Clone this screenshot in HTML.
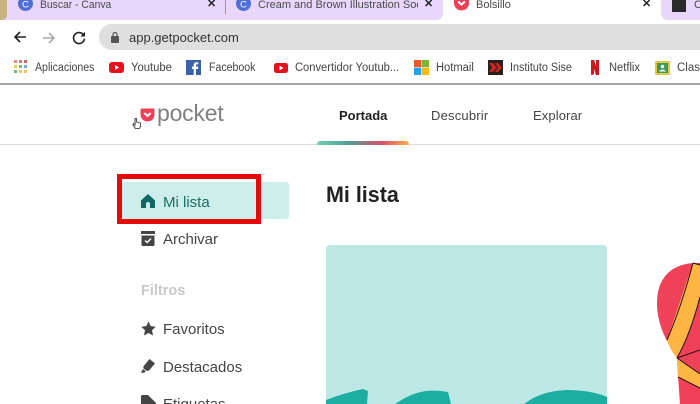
<!DOCTYPE html>
<html lang="es"><head><meta charset="utf-8"><title>Bolsillo</title>
<style>
html,body{margin:0;padding:0;width:700px;height:404px;overflow:hidden;background:#fff}
body{position:relative;font-family:"Liberation Sans",sans-serif;color:#333}
.a{position:absolute}
.t{position:absolute;white-space:nowrap;line-height:1}
.tab{font-size:11px;color:#4a4a4a;top:0;transform-origin:left}
.bm{font-size:11.5px;color:#444;top:62.5px;transform-origin:left}
.x{position:absolute;top:-1px;font-size:11px;font-weight:700;color:#222;line-height:10px}
.nav{font-size:13px;color:#444;top:109px}
.side{font-size:15px;color:#444}
svg{position:absolute;display:block}
</style></head><body>
<div class="a" style="left:0;top:0;width:700px;height:20px;background:#e8d6fb"></div>
<div class="a" style="left:0;top:0;width:7px;height:20px;background:#c9b27f;border-bottom-right-radius:5px"></div>
<div class="a" style="left:443px;top:0;width:218px;height:21px;background:#fff"></div>
<div class="a" style="left:433px;top:10px;width:10px;height:10px;background:#fff"></div>
<div class="a" style="left:433px;top:0;width:10px;height:20px;background:#e8d6fb;border-bottom-right-radius:7px"></div>
<div class="a" style="left:661px;top:10px;width:10px;height:10px;background:#fff"></div>
<div class="a" style="left:661px;top:0;width:10px;height:20px;background:#e8d6fb;border-bottom-left-radius:7px"></div>
<div class="a" style="left:225px;top:0;width:1px;height:14px;background:#9d95a8"></div>

<svg style="left:18px;top:-4px" width="15" height="15" viewBox="0 0 16 16"><circle cx="8" cy="8" r="8" fill="#4f6fd8"/><text x="8" y="12" font-size="10" font-family="Liberation Sans,sans-serif" fill="#fff" text-anchor="middle">C</text></svg>
<div class="t tab" style="left:40px;transform:scaleX(.94)">Buscar - Canva</div>
<div class="x" style="left:207px">✕</div>
<svg style="left:236px;top:-4px" width="15" height="15" viewBox="0 0 16 16"><circle cx="8" cy="8" r="8" fill="#4f6fd8"/><text x="8" y="12" font-size="10" font-family="Liberation Sans,sans-serif" fill="#fff" text-anchor="middle">C</text></svg>
<div class="t tab" style="left:258px;width:160px;overflow:hidden">Cream and Brown Illustration Soc</div>
<div class="x" style="left:424px">✕</div>
<svg style="left:454px;top:-4px" width="15" height="15" viewBox="0 0 15 15"><path d="M1 1H14Q15 1 15 2V7A7.5 7.5 0 0 1 0 7V2Q0 1 1 1Z" fill="#ee4056"/><path d="M4.2 5.5L7.5 8.6L10.8 5.5" fill="none" stroke="#fff" stroke-width="2"/></svg>
<div class="t tab" style="left:476px">Bolsillo</div>
<div class="x" style="left:642px">✕</div>
<div class="a" style="left:672px;top:0;width:14px;height:12px;background:#2a2a2a"></div>
<div class="t tab" style="left:694px">C</div>

<svg style="left:12px;top:29px" width="16" height="16" viewBox="0 0 16 16"><path d="M14 8H3M8 3L3 8L8 13" fill="none" stroke="#222" stroke-width="1.6"/></svg>
<svg style="left:41px;top:30px" width="16" height="16" viewBox="0 0 16 16"><path d="M2 8H13M8 3L13 8L8 13" fill="none" stroke="#aaa" stroke-width="1.6"/></svg>
<svg style="left:71px;top:30px" width="16" height="16" viewBox="0 0 16 16"><path d="M12.6 5A5.500 5.500 0 1 0 13.500 8.700" fill="none" stroke="#222" stroke-width="1.600"/><path d="M9.500 6.500H14V1.800Z" fill="#222"/></svg>
<div class="a" style="left:99px;top:24px;width:640px;height:26px;border-radius:13px;background:#dfdfdf"></div>
<svg style="left:110px;top:31px" width="10" height="12" viewBox="0 0 10 12"><rect x="1" y="5" width="8" height="7" rx="1" fill="#555"/><path d="M3 5V3.500A2 2 0 0 1 7 3.500V5" fill="none" stroke="#555" stroke-width="1.200"/></svg>
<div class="t" style="left:129px;top:31px;font-size:13px;color:#333">app.getpocket.com</div>

<svg style="left:14px;top:60px" width="13" height="13" viewBox="0 0 13 13"><g>
<rect x="0" y="0" width="3" height="3" fill="#e58a85"/><rect x="5" y="0" width="3" height="3" fill="#e07a75"/><rect x="10" y="0" width="3" height="3" fill="#d9635e"/>
<rect x="0" y="5" width="3" height="3" fill="#eec765"/><rect x="5" y="5" width="3" height="3" fill="#80b780"/><rect x="10" y="5" width="3" height="3" fill="#74a3e2"/>
<rect x="0" y="10" width="3" height="3" fill="#80b780"/><rect x="5" y="10" width="3" height="3" fill="#eec765"/><rect x="10" y="10" width="3" height="3" fill="#eec765"/></g></svg>
<div class="t bm" style="left:35px;transform:scaleX(.92)">Aplicaciones</div>
<svg style="left:109px;top:62px" width="15" height="11" viewBox="0 0 15 11"><rect width="15" height="11" rx="3" fill="#e8101c"/><path d="M6 3L10 5.500L6 8Z" fill="#fff"/></svg>
<div class="t bm" style="left:131px;transform:scaleX(.98)">Youtube</div>
<svg style="left:186px;top:60px" width="15" height="15" viewBox="0 0 15 15"><rect width="15" height="15" fill="#3b62a8"/><path d="M10 15V9H12L12.300 6.600H10V5.200Q10 4.200 11 4.200H12.400V2.200H10.500Q7.700 2.200 7.700 5V6.600H6V9H7.700V15Z" fill="#fff"/></svg>
<div class="t bm" style="left:209px;transform:scaleX(.92)">Facebook</div>
<svg style="left:274px;top:63px" width="14" height="10" viewBox="0 0 14 10"><rect width="14" height="10" rx="2.500" fill="#e8101c"/><path d="M5.500 2.600L9.500 5L5.500 7.400Z" fill="#fff"/></svg>
<div class="t bm" style="left:295px;transform:scaleX(.97)">Convertidor Youtub...</div>
<svg style="left:414px;top:60px" width="15" height="15" viewBox="0 0 15 15"><rect width="7.200" height="7.200" fill="#f0562c"/><rect x="7.800" width="7.200" height="7.200" fill="#7cb82f"/><rect y="7.800" width="7.200" height="7.200" fill="#1fa4ec"/><rect x="7.800" y="7.800" width="7.200" height="7.200" fill="#fdb813"/></svg>
<div class="t bm" style="left:436px;transform:scaleX(.97)">Hotmail</div>
<svg style="left:488px;top:60px" width="15" height="15" viewBox="0 0 15 15"><rect width="15" height="15" fill="#2a1f1f"/><path d="M1 3H5L9 7.500L5 12H1L4 7.500ZM7 3H10L14 7.500L10 12H7L10 7.500Z" fill="#c9261f"/></svg>
<div class="t bm" style="left:510px;transform:scaleX(.94)">Instituto Sise</div>
<svg style="left:590px;top:60px" width="10" height="15" viewBox="0 0 10 15"><path d="M1 0H4L9 15H6ZM1 0H4V14.500L1 15ZM6 0H9V15L6 14.500Z" fill="#d2141c"/></svg>
<div class="t bm" style="left:609px;transform:scaleX(.97)">Netflix</div>
<svg style="left:655px;top:61px" width="15" height="14" viewBox="0 0 15 14"><rect width="15" height="14" rx="1" fill="#e3c743"/><rect x="2" y="2" width="11" height="10" fill="#3c9a5f"/><circle cx="7.500" cy="5.500" r="1.700" fill="#fff"/><path d="M4 10.500Q7.500 6.500 11 10.500Z" fill="#fff"/></svg>
<div class="t bm" style="left:677px">Class</div>
<div class="a" style="left:0;top:83px;width:700px;height:2px;background:#a8a8a8"></div>

<svg style="left:140px;top:107.500px" width="15" height="15" viewBox="0 0 15 15"><path d="M1.500 0.500H13.500Q14.500 0.500 14.500 1.500V6.500A7 7 0 0 1 0.500 6.500V1.500Q0.500 0.500 1.500 0.500Z" fill="#ee4056"/><path d="M4.300 5L7.500 8L10.700 5" fill="none" stroke="#fff" stroke-width="2"/></svg>
<div class="t" style="left:157px;top:102px;font-size:23px;color:#808080;letter-spacing:-.2px">pocket</div>
<svg style="left:132px;top:117px" width="10" height="13" viewBox="0 0 10 13"><path d="M3 1.500V8L1.500 6.500L1 8L3.500 11.500H7.500L8.500 9.500V6L4.500 5V1.500Z" fill="#fff" stroke="#555" stroke-width="1.100"/></svg>

<div class="t nav" style="left:339px;font-weight:700;color:#1f1f1f">Portada</div>
<div class="t nav" style="left:431px;letter-spacing:.2px">Descubrir</div>
<div class="t nav" style="left:533px;letter-spacing:.1px">Explorar</div>
<div class="a" style="left:0;top:144px;width:700px;height:1px;background:#dcdcdc"></div>
<svg style="left:317px;top:141px" width="92" height="4" viewBox="0 0 92 4"><defs><linearGradient id="g"><stop offset="0" stop-color="#6fd0b8"/><stop offset=".35" stop-color="#4f9f94"/><stop offset=".7" stop-color="#d8506a"/><stop offset="1" stop-color="#f5b04a"/></linearGradient></defs><path d="M3 0H89Q92 0 92 4H0Q0 0 3 0Z" fill="url(#g)"/></svg>

<div class="a" style="left:122px;top:182px;width:167px;height:37px;background:#cdeeea;border-radius:3px"></div>
<div class="a" style="left:117px;top:174px;width:144px;height:50px;box-sizing:border-box;border:5px solid #e60b0b"></div>
<svg style="left:141px;top:194px" width="14" height="14" viewBox="0 0 14 14"><path d="M7 0L14 6.500V14H9V10A2 2 0 0 0 5 10V14H0V6.500Z" fill="#0f6a63"/></svg>
<div class="t side" style="left:163px;top:194.500px;color:#1a6e66">Mi lista</div>
<svg style="left:141px;top:231px" width="14" height="15" viewBox="0 0 14 15"><rect x="0" y="0" width="14" height="3" fill="#444"/><path d="M0.500 4.500H13.500V14Q13.500 15 12.500 15H1.500Q0.500 15 0.500 14Z" fill="#444"/><path d="M4 9.500L6.200 11.500L10 7.500" fill="none" stroke="#fff" stroke-width="1.400"/></svg>
<div class="t side" style="left:163px;top:232px">Archivar</div>
<div class="t" style="left:141px;top:284px;font-size:14.500px;font-weight:700;color:#c8c8c8">Filtros</div>
<svg style="left:141px;top:321px" width="15" height="15" viewBox="0 0 15 15"><path d="M7.500 0.500L9.700 5.100L14.700 5.800L11 9.300L12 14.500L7.500 12L3 14.500L4 9.300L0.300 5.800L5.300 5.100Z" fill="#444"/></svg>
<div class="t side" style="left:163px;top:321.500px">Favoritos</div>
<svg style="left:141px;top:359px" width="14" height="14" viewBox="0 0 14 14"><path d="M8.500 0L14 4.500L8 11.500Q6 12 5 11.500L2.700 9.500Q2 8.500 2.700 7Z" fill="#444"/><path d="M2 10L4.500 12L3.500 13.800H0Z" fill="#444"/></svg>
<div class="t side" style="left:163px;top:359.500px">Destacados</div>
<svg style="left:141px;top:395px" width="15" height="9" viewBox="0 0 15 9"><path d="M1 0H7L15 8V9H0V1Z" fill="#444"/></svg>
<div class="t side" style="left:163px;top:397px">Etiquetas</div>

<div class="t" style="left:326px;top:184px;font-size:22.500px;font-weight:700;color:#222;transform:scaleX(.955);transform-origin:left">Mi lista</div>

<div class="a" style="left:326px;top:245px;width:281px;height:159px;background:#bde8e5;border-radius:4px 4px 0 0"></div>
<svg style="left:326px;top:385px" width="281" height="19" viewBox="0 0 281 19"><path d="M0 15Q18 8 37 4L42 6L41 19H0Z" fill="#1daea2"/><path d="M69 19Q85 8 100 6Q112 5 122 7L125 19Z" fill="#1daea2"/><path d="M198 19Q215 6 240 5Q265 5 281 12V19Z" fill="#1daea2"/></svg>

<svg style="left:640px;top:250px" width="60" height="154" viewBox="0 0 60 154">
<path d="M53 13Q28 15 20 35Q13 55 22 80Q28 95 37 108L38 126L40 154H60V13Z" fill="#ef4259"/>
<path d="M53 13L60 15V47Q50 85 37 108Q30 100 27 90ZM37 108L60 124V138L38 127Z" fill="#fdb544"/>
<path d="M53 13Q42 55 27 90M60 47Q50 85 37 108M37 108L60 100M37 108L60 124M38 127L60 138M53 13L60 15" fill="none" stroke="#2a1016" stroke-width="1"/>
</svg>
</body></html>
